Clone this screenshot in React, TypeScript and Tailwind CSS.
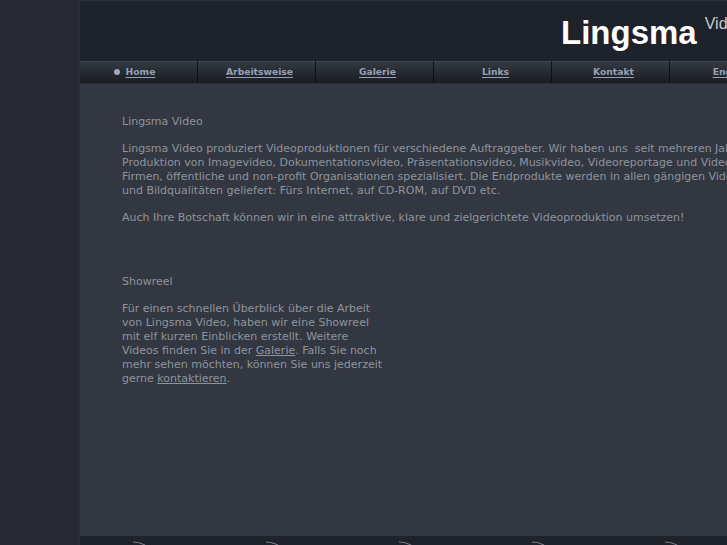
import React from "react";

const navItems = ["Home", "Arbeitsweise", "Galerie", "Links", "Kontakt", "English"];

function NavButton({ label, active }: { label: string; active?: boolean }) {
  return (
    <div className="flex h-[22px] w-[117px] shrink-0 items-center justify-center pl-[6px] bg-gradient-to-b from-[#363a43] via-[#262a31] to-[#1a1d22] shadow-[inset_0_1px_0_#40444c]">
      {active && <span className="mr-[6px] inline-block h-[6px] w-[6px] rounded-full bg-[#9aa7c2] -ml-[14px]" />}
      <a className="text-[9.2px] font-bold text-[#95a0b6] underline underline-offset-[2px]" href="#">
        {label}
      </a>
    </div>
  );
}

export default function App() {
  return (
    <div
      className="flex h-[545px] w-full overflow-hidden bg-[#272a32] text-[11px] leading-[14px] text-[#8f949d]"
      style={{ fontFamily: '"DejaVu Sans", sans-serif' }}
    >
      <div className="w-[80px] shrink-0 bg-[#272a32] border-r border-[#2b2f37]" />
      <div className="flex w-[900px] shrink-0 flex-col">
        <header className="flex h-[61px] shrink-0 items-start border-t border-[#2a2e36] bg-[#1e222a]">
          <div className="ml-[481px] flex items-start">
            <span
              className="mt-[13px] text-[33px] font-bold leading-[38px] text-white"
              style={{ fontFamily: '"Liberation Sans", Arial, sans-serif' }}
            >
              Lingsma
            </span>
            <span
              className="ml-[8px] mt-[14px] text-[16px] leading-[18px] text-[#c9ccd1]"
              style={{ fontFamily: '"Liberation Sans", Arial, sans-serif' }}
            >
              Video
            </span>
          </div>
        </header>
        <nav className="flex h-[23px] shrink-0 bg-[#0e1013] gap-[1px] border-b border-[#2a2d34]">
          {navItems.map((n, i) => (
            <NavButton key={n} label={n} active={i === 0} />
          ))}
        </nav>
        <main className="flex-1 bg-[#333741] pl-[42px] pt-[31px]">
          <p className="whitespace-nowrap">Lingsma Video</p>
          <p className="mt-[13px] whitespace-nowrap">
            Lingsma Video produziert Videoproduktionen für verschiedene Auftraggeber. Wir haben uns&nbsp; seit mehreren Jahren auf die
            <br />
            Produktion von Imagevideo, Dokumentationsvideo, Präsentationsvideo, Musikvideo, Videoreportage und Videoclips für
            <br />
            Firmen, öffentliche und non-profit Organisationen spezialisiert. Die Endprodukte werden in allen gängigen Videoformaten
            <br />
            und Bildqualitäten geliefert: Fürs Internet, auf CD-ROM, auf DVD etc.
          </p>
          <p className="mt-[13px] whitespace-nowrap">
            Auch Ihre Botschaft können wir in eine attraktive, klare und zielgerichtete Videoproduktion umsetzen!
          </p>
          <p className="mt-[50px] whitespace-nowrap">Showreel</p>
          <p className="mt-[13px] whitespace-nowrap">
            Für einen schnellen Überblick über die Arbeit
            <br />
            von Lingsma Video, haben wir eine Showreel
            <br />
            mit elf kurzen Einblicken erstellt. Weitere
            <br />
            Videos finden Sie in der{" "}
            <a href="#" className="underline">
              Galerie
            </a>
            . Falls Sie noch
            <br />
            mehr sehen möchten, können Sie uns jederzeit
            <br />
            gerne{" "}
            <a href="#" className="underline">
              kontaktieren
            </a>
            .
          </p>
        </main>
        <footer className="flex h-[9px] shrink-0 items-end bg-[#1e222a] pl-[52px] gap-[119px]">
          {[0, 1, 2, 3, 4].map((i) => (
            <svg key={i} width="14" height="4" viewBox="0 0 14 4" className="shrink-0">
              <path d="M1 1 Q7 1 13 4" stroke="#7a7e86" strokeWidth="1.2" fill="none" />
            </svg>
          ))}
        </footer>
      </div>
    </div>
  );
}
